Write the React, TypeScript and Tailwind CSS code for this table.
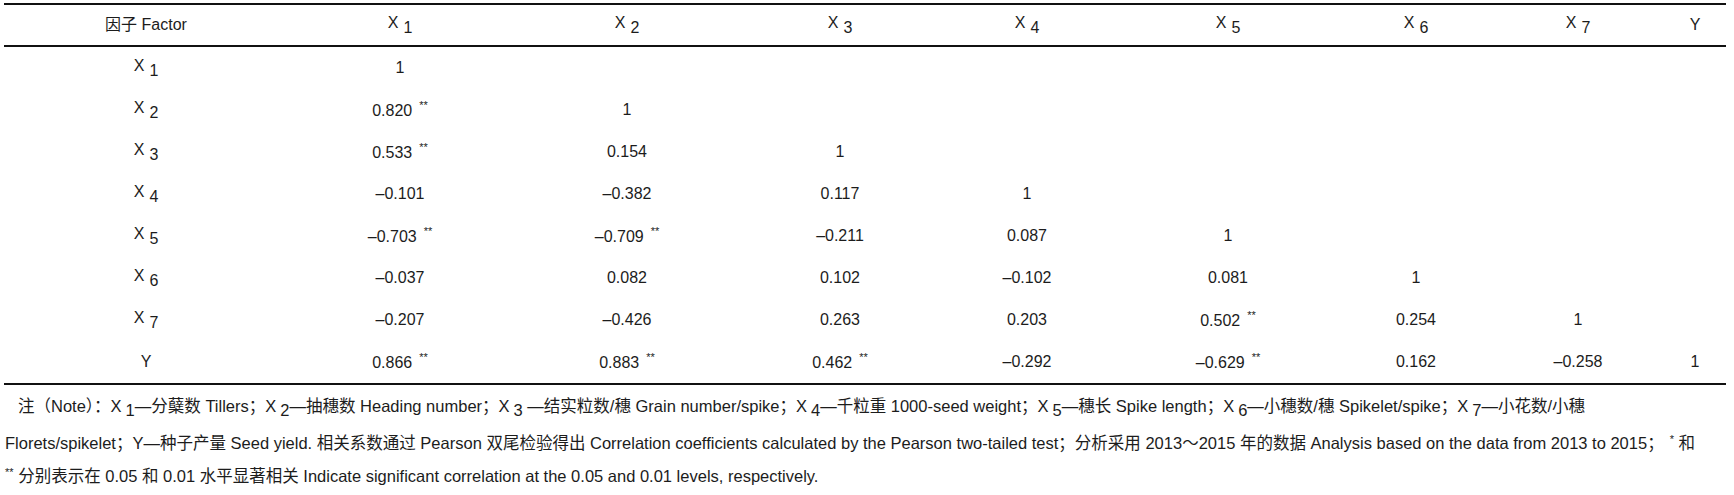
const cols = "grid grid-cols-[284px_224px_230px_196px_178px_224px_152px_172px_62px]";

const X = ({ n }: { n: string }) => (
  <span>
    X<span className="ml-[5px] inline-block align-[-5px]">{n}</span>
  </span>
);

const Val = ({ v }: { v: string }) => {
  const star = v.endsWith("**");
  const num = star ? v.slice(0, -2) : v;
  return (
    <span>
      {num}
      {star && <span className="ml-[7px] inline-block align-[7px] text-[11px]">**</span>}
    </span>
  );
};

const rows: { label: string; sub?: string; vals: string[] }[] = [
  { label: "X", sub: "1", vals: ["1"] },
  { label: "X", sub: "2", vals: ["0.820**", "1"] },
  { label: "X", sub: "3", vals: ["0.533**", "0.154", "1"] },
  { label: "X", sub: "4", vals: ["–0.101", "–0.382", "0.117", "1"] },
  { label: "X", sub: "5", vals: ["–0.703**", "–0.709**", "–0.211", "0.087", "1"] },
  { label: "X", sub: "6", vals: ["–0.037", "0.082", "0.102", "–0.102", "0.081", "1"] },
  { label: "X", sub: "7", vals: ["–0.207", "–0.426", "0.263", "0.203", "0.502**", "0.254", "1"] },
  { label: "Y", vals: ["0.866**", "0.883**", "0.462**", "–0.292", "–0.629**", "0.162", "–0.258", "1"] },
];

const S = ({ n }: { n: string }) => (
  <span className="ml-[4px] inline-block align-[-4px]">{n}</span>
);

export default function App() {
  return (
    <div className="w-[1734px] h-[495px] overflow-hidden bg-white text-[#1c1c1c] font-['Liberation_Sans','Noto_Sans_CJK_SC',sans-serif]">
      <div className="ml-[4px] w-[1722px] pt-[3px]">
        {/* header */}
        <div className={`${cols} h-[44px] items-center border-y-2 border-[#111] text-[16px]`}>
          <div className="text-center">因子 Factor</div>
          {["1", "2", "3", "4", "5", "6", "7"].map((n) => (
            <div key={n} className="text-center">
              <X n={n} />
            </div>
          ))}
          <div className="text-center">Y</div>
        </div>

        {/* body */}
        <div className="border-b-2 border-[#111] text-[16px]">
          {rows.map((r, i) => (
            <div key={i} className={`${cols} h-[42px] items-center`}>
              <div className="text-center">{r.sub ? <X n={r.sub} /> : r.label}</div>
              {r.vals.map((v, j) => (
                <div key={j} className="text-center">
                  <Val v={v} />
                </div>
              ))}
            </div>
          ))}
        </div>

        {/* notes */}
        <div className="mt-[7px] text-[16.5px] leading-[29px] whitespace-nowrap">
          <div className="pl-[14px]">
            注（Note）：X<S n="1" />—分蘖数 Tillers；X<S n="2" />—抽穗数 Heading number；X<S n="3" /> —结实粒数/穗 Grain
            number/spike；X<S n="4" />—千粒重 1000-seed weight；X<S n="5" />—穗长 Spike length；X<S n="6" />—小穗数/穗
            Spikelet/spike；X<S n="7" />—小花数/小穗
          </div>
          <div className="pl-[1px]">
            Florets/spikelet；Y—种子产量 Seed yield. 相关系数通过 Pearson 双尾检验得出 Correlation coefficients calculated by
            the Pearson two-tailed test；分析采用 2013～2015 年的数据 Analysis based on the data from 2013 to 2015；
            <span className="ml-[6px] inline-block align-[6px] text-[11px]">*</span> 和
          </div>
          <div className="pl-[1px]">
            <span className="inline-block align-[6px] text-[11px]">**</span> 分别表示在 0.05 和 0.01 水平显著相关 Indicate
            significant correlation at the 0.05 and 0.01 levels, respectively.
          </div>
        </div>
      </div>
    </div>
  );
}
